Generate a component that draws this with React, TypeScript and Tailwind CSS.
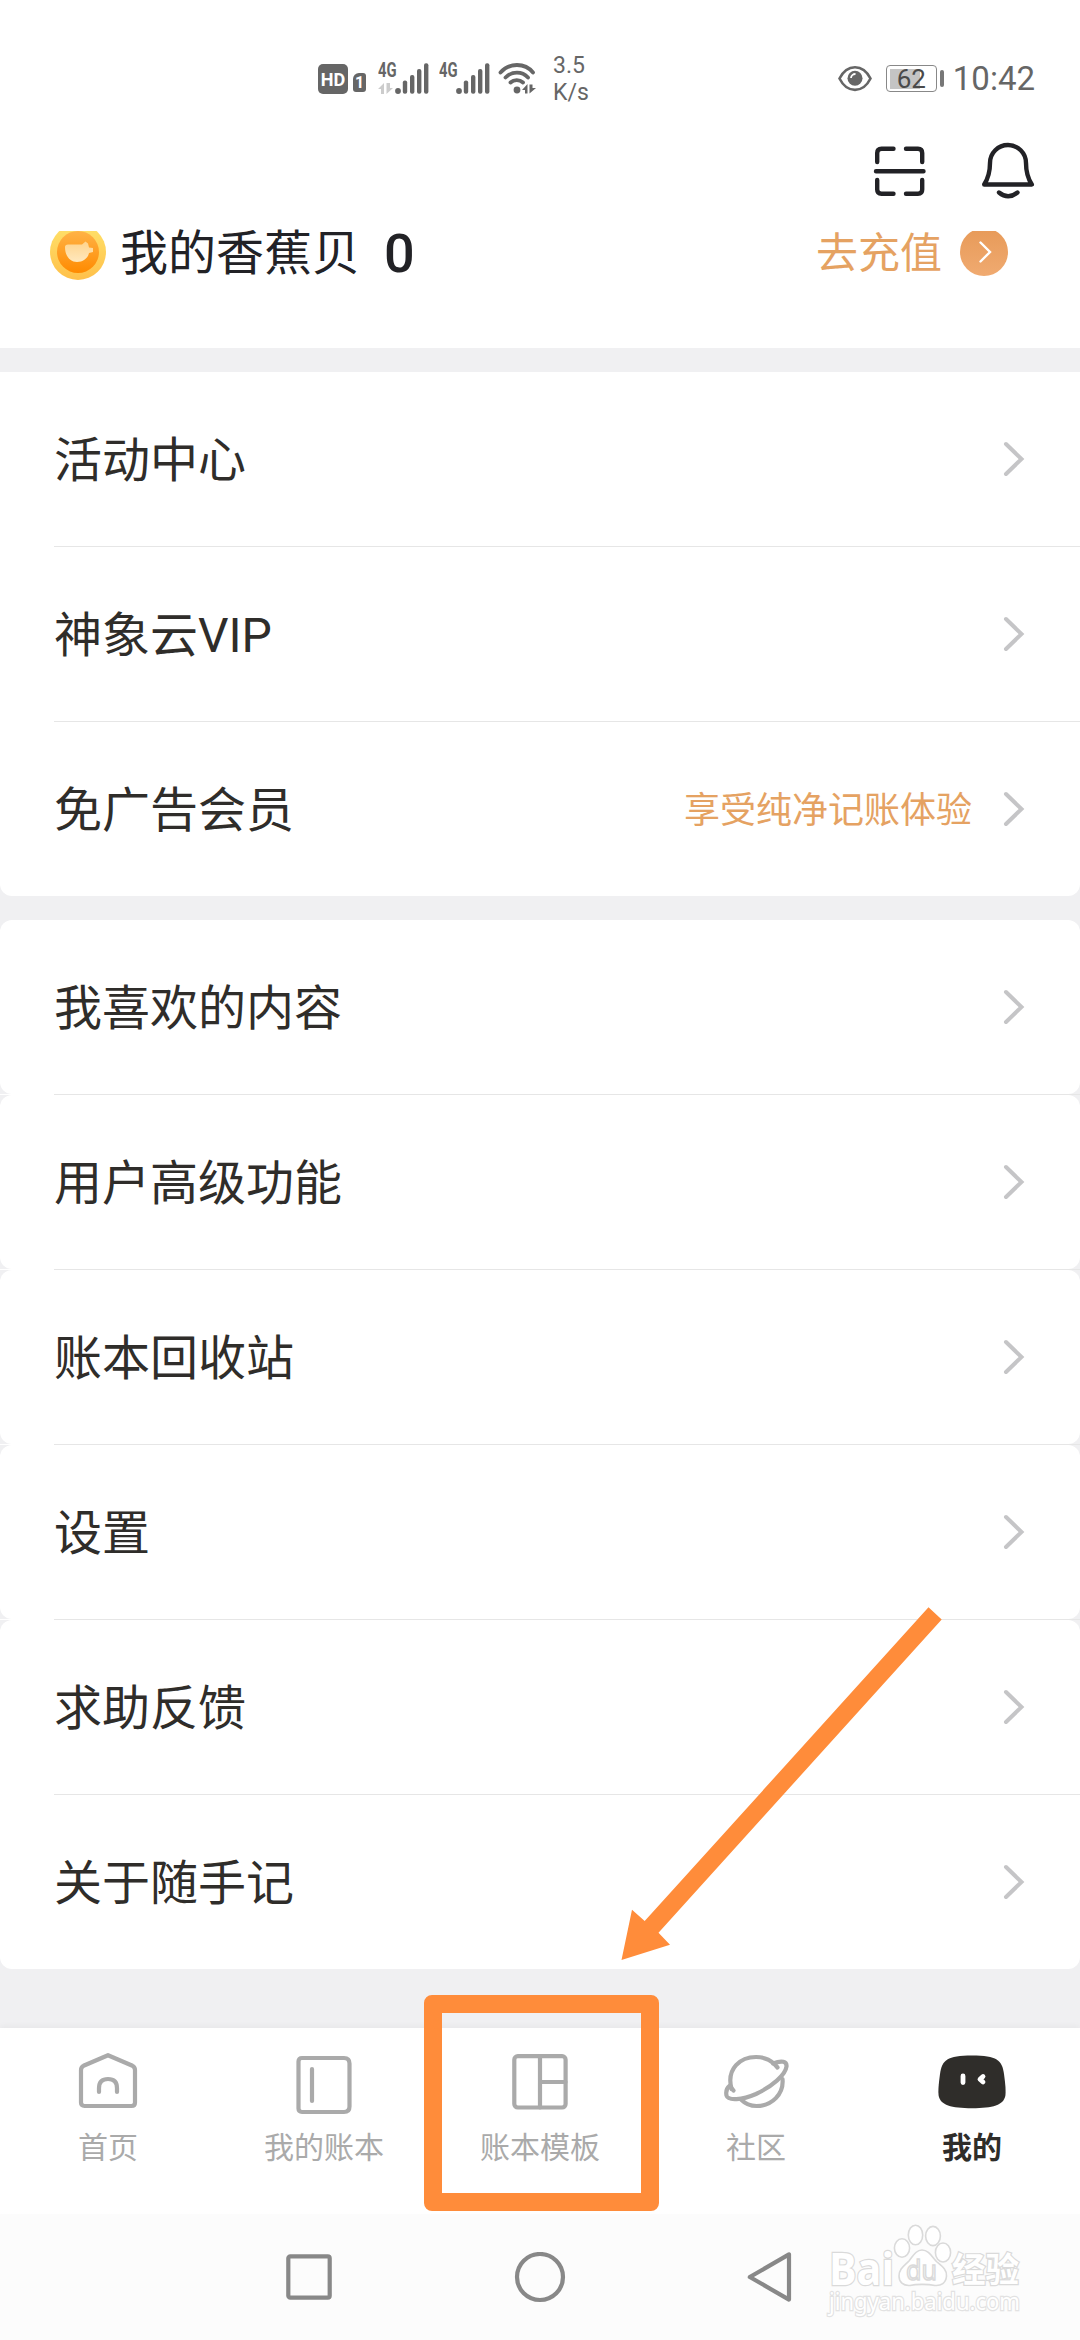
import type { ReactNode } from 'react'

interface MenuRow {
  label: string
  note?: string
  // cards in the second group have their own rounded corners
  top?: boolean
  bottom?: boolean
}

const SERVICES: MenuRow[] = [
  { label: '活动中心' },
  { label: '神象云VIP' },
  { label: '免广告会员', note: '享受纯净记账体验', bottom: true },
]

const SETTINGS: MenuRow[] = [
  { label: '我喜欢的内容', top: true, bottom: true },
  { label: '用户高级功能', top: true, bottom: true },
  { label: '账本回收站', top: true, bottom: true },
  { label: '设置', top: true, bottom: true },
  { label: '求助反馈', top: true },
  { label: '关于随手记', bottom: true },
]

function Signal() {
  return (
    <svg width="34" height="31" viewBox="0 0 34 31" fill="#666">
      <circle cx="3" cy="28" r="2.9" />
      <rect x="7.8" y="17.5" width="4.4" height="13.3" rx="2" />
      <rect x="15" y="12" width="4.4" height="18.8" rx="2" />
      <rect x="22" y="6" width="4.4" height="24.8" rx="2" />
      <rect x="29" y="0.3" width="4.4" height="30.5" rx="2" />
    </svg>
  )
}

function Network({ arrows }: { arrows?: boolean }) {
  return (
    <div className="relative flex h-[31px] w-[51px] justify-end">
      <span className="absolute -top-px left-0 origin-left scale-x-[0.74] text-[20px] leading-[17px] font-bold">4G</span>
      {arrows && (
        <svg className="absolute left-0 bottom-0" width="16" height="11" viewBox="0 0 16 11" fill="#ccc">
          <path d="M0 6 6 0V11H3V6ZM8.500 0V11L15 5H12V0Z" />
        </svg>
      )}
      <Signal />
    </div>
  )
}

function StatusBar() {
  return (
    <div className="flex h-[120px] items-start pt-[63px] pr-[45px] pl-[318px] text-[#666]">
      <div className="mt-px flex h-[30px] w-[30px] items-center justify-center rounded-[5px] bg-[#666] text-[19px] leading-none font-bold text-white">
        <span className="scale-x-[0.95]">HD</span>
      </div>
      <div className="mt-[10px] ml-[5px] flex h-[19px] w-[13px] items-center justify-center rounded-[3px] rounded-tl-[6px] bg-[#666] text-[16px] leading-none font-bold text-white">
        1
      </div>
      <div className="ml-3">
        <Network arrows />
      </div>
      <div className="ml-[10px]">
        <Network />
      </div>
      <svg className="ml-[8px]" width="39" height="31" viewBox="0 0 39 31" fill="none">
        <g stroke="#666" strokeWidth="3.8" strokeLinecap="round">
          <path d="M2.5 9.5C11 -.5 27 -.5 35 9.5" />
          <path d="M7.5 14.5C14 8 24 8 30 14.5" />
          <path d="M12.5 19.5C16 16.3 21.5 16.3 25 19.5" />
        </g>
        <circle cx="19" cy="27" r="3.4" fill="#666" />
        <path d="M24 27 29.5 21V30.5H27V27ZM31.5 21.5V30.5L38 25H34.5V21.5Z" fill="#666" />
      </svg>
      <div className="-mt-[11px] ml-[16px] text-[23px] leading-[27px]">
        <div>3.5</div>
        <div>K/s</div>
      </div>
      <div className="ml-auto flex h-[31px] items-center">
        <svg width="34" height="27" viewBox="0 0 34 27" fill="none">
          <path d="M1.5 13.5C9 -1.6 25 -1.6 32.5 13.5 25 28.6 9 28.6 1.5 13.5Z" stroke="#666" strokeWidth="2.6" />
          <circle cx="17" cy="13.3" r="7.5" fill="#666" />
          <path d="M13 13a4.3 4.3 0 0 1 4.5-4" stroke="#fff" strokeWidth="1.8" />
        </svg>
        <div className="relative ml-[14px] flex h-[27px] w-[51px] items-center justify-center rounded-[4px] border-[1.5px] border-[#888]">
          <div className="absolute top-[3px] left-[3px] h-[20px] w-[30px] bg-[#c4c4c4]" />
          <span className="relative text-[26px] leading-none text-[#4a4a4a]">62</span>
        </div>
        <div className="ml-[3px] h-[17px] w-[4px] rounded-sm bg-[#777]" />
        <span className="ml-[9px] text-[33px] leading-none">10:42</span>
      </div>
    </div>
  )
}

function TopActions() {
  return (
    <div className="flex h-[111px] items-start justify-end gap-[55px] pt-[22px] pr-[45px]">
      <svg className="mt-[3px]" width="53" height="52" viewBox="0 0 53 52" fill="none" stroke="#222226" strokeWidth="4.4" strokeLinecap="round">
        <path d="M3 26.3H50.5M4.2 17V8Q4.2 3.7 8.5 3.7H20.5M33 3.7H45Q49.2 3.7 49.2 8V17M4.2 35V44.5Q4.2 48.8 8.5 48.8H20.5M33 48.8H45Q49.2 48.8 49.2 44.5V35" />
      </svg>
      <svg width="54" height="57" viewBox="0 0 54 57" fill="none" stroke="#222226" strokeWidth="4.4" strokeLinecap="round" strokeLinejoin="round">
        <path d="M3.2 42.5C8 35 9 29 9 21A18 18 0 0 1 45 21C45 29 46 35 50.8 42.5Z" />
        <path d="M18 50.5Q27 58 36.5 50.5" />
      </svg>
    </div>
  )
}

function Coin() {
  return (
    <svg className="shrink-0 self-start" width="56" height="49" viewBox="0 7 56 49">
      <defs>
        <linearGradient id="coinRim" x1="0" y1="0" x2="0" y2="1">
          <stop offset="0" stopColor="#ffe26a" />
          <stop offset="1" stopColor="#ffc04a" />
        </linearGradient>
        <linearGradient id="coinFace" x1="0" y1="0" x2="0" y2="1">
          <stop offset="0" stopColor="#ffb347" />
          <stop offset="1" stopColor="#ff8a00" />
        </linearGradient>
        <linearGradient id="coinPig" x1="0" y1="0" x2="0" y2="1">
          <stop offset="0" stopColor="#ffd48c" />
          <stop offset="1" stopColor="#ffe8be" />
        </linearGradient>
      </defs>
      <circle cx="28" cy="28" r="28" fill="url(#coinRim)" />
      <circle cx="28" cy="28" r="21" fill="url(#coinFace)" />
      <path d="M15 23Q15 20.5 18 20.5H32L35.5 17.5 38 19.5 39 23.5 43 24V28L39 29C38 34 33 38 27 38 20 38 15 32 15 23Z" fill="url(#coinPig)" />
    </svg>
  )
}

function Balance() {
  return (
    <section className="h-[117px] bg-white">
      <div className="flex h-[46px] items-center pr-[72px] pl-[50px]">
        <Coin />
        <span className="ml-[14px] text-[48px] leading-none whitespace-nowrap text-[#222226]">我的香蕉贝</span>
        <span className="ml-[24px] text-[54px] leading-none font-medium text-[#222226]">0</span>
        <span className="ml-auto text-[42px] leading-none whitespace-nowrap text-[#e5a262]">去充值</span>
        <svg className="ml-[18px] shrink-0 self-start" width="48" height="45" viewBox="0 3 48 45" fill="none">
          <defs>
            <linearGradient id="goFill" x1="0" y1="0" x2="0" y2="1">
              <stop offset="0" stopColor="#e79a58" />
              <stop offset="1" stopColor="#f0aa70" />
            </linearGradient>
          </defs>
          <circle cx="24" cy="24" r="24" fill="url(#goFill)" />
          <path d="M20.5 14.5 30 24 20.5 33.5" stroke="#fff" strokeWidth="2.4" strokeLinecap="round" />
        </svg>
      </div>
    </section>
  )
}

function Row({ row }: { row: MenuRow }) {
  return (
    <div
      className={`flex h-[174px] items-center bg-white pr-[55px] pl-[54px] ${row.top ? 'rounded-t-xl' : ''} ${row.bottom ? 'rounded-b-xl' : ''}`}
    >
      <span className="pt-[3px] text-[48px] leading-none text-[#2f2d2a]">{row.label}</span>
      {row.note && <span className="ml-auto pt-[3px] text-[36px] leading-none text-[#e5a262]">{row.note}</span>}
      <svg className={row.note ? 'ml-[31px]' : 'ml-auto'} width="22" height="36" viewBox="0 0 22 36" fill="none">
        <path d="M3 3 18.5 18 3 33" stroke="#c5c5c7" strokeWidth="4" strokeLinecap="round" />
      </svg>
    </div>
  )
}

function Menu({ rows }: { rows: MenuRow[] }) {
  return (
    <section>
      {rows.map((row, i) => (
        <div key={row.label}>
          {i > 0 && (
            <div className="h-px bg-white pl-[54px]">
              <div className="h-px bg-[#e6e6e6]" />
            </div>
          )}
          <Row row={row} />
        </div>
      ))}
    </section>
  )
}

function Tab({ label, active, children }: { label: string; active?: boolean; children: ReactNode }) {
  return (
    <div className="flex flex-1 flex-col items-center pt-[23px]">
      <svg width="68" height="66" viewBox="0 0 68 66" fill="none" stroke="#aaa" strokeWidth="4.2" strokeLinecap="round" strokeLinejoin="round">
        {children}
      </svg>
      <span className={`mt-[16px] text-[30px] leading-[30px] ${active ? 'font-bold text-[#2f2d2a]' : 'text-[#aaa]'}`}>
        {label}
      </span>
    </div>
  )
}

function TabBar() {
  return (
    <nav className="relative flex h-[186px] bg-white shadow-[0_-2px_6px_rgba(0,0,0,0.04)]">
      <Tab label="首页">
        <path d="M34 4.2 58.5 14.8Q61 16 61 19V51.5Q61 55 57.5 55H10.5Q7 55 7 51.5V19Q7 16 9.5 14.8Z" />
        <path d="M25 41V37Q25 28 34 28T43 37V41" />
      </Tab>
      <Tab label="我的账本">
        <path d="M12 7H54Q59.5 7 59.5 12.5V55.5Q59.5 61 54 61H12Q8.5 61 8.5 57.5V10.5Q8.5 7 12 7Z" />
        <path d="M22 18V50" />
      </Tab>
      <Tab label="账本模板">
        <rect x="8.3" y="5.2" width="51.3" height="51.3" rx="3.5" />
        <path d="M34 5.2V56.5M34 31H59.5" />
      </Tab>
      <Tab label="社区">
        <path d="M9.5 38C4 17 19 6 34 6 42 6 48 9 52 12.5" />
        <path d="M60.5 28C62 43 50 55 34.5 55 28 55 23 52.5 19 48.5" />
        <path d="M51 12.5C60 9 65 10.5 64.5 15.5 63.5 24 50 35.5 34 43 20 49 6 50 4.5 44.5 3.8 41 5 37 7.5 35M11.5 39.5 9.5 37M52 12.5 55.5 16.5" />
      </Tab>
      <Tab label="我的" active>
        <path d="M34 4.5C59 4.5 64 9 66 23 67.5 34 68 41 67.3 45 65.5 54 55 57.2 34 57.2S2.5 54 .7 45C0 41 .5 34 2 23 4 9 9 4.5 34 4.5Z" fill="#2f2d2a" stroke="none" />
        <path d="M25 25V31.5M45 25.500 42 28.300 45 31" stroke="#fff" strokeWidth="4.8" />
      </Tab>
      {/* callout frame around the template tab */}
      <div className="absolute -top-[33px] left-[424px] h-[216px] w-[235px] rounded-[8px] border-[18px] border-[#ff8c3a]" />
    </nav>
  )
}

function Watermark() {
  return (
    <svg
      className="absolute top-[5px] left-[820px]"
      width="210"
      height="110"
      viewBox="0 0 210 110"
      fill="#fff"
      stroke="#dadada"
      strokeWidth="2.4"
    >
      <g paintOrder="stroke" fontWeight="700">
        <text x="9" y="66" fontSize="45" fontFamily="Open Sans" textLength="65" lengthAdjust="spacingAndGlyphs">
          Bai
        </text>
        <text x="132" y="63" fontSize="34" fontFamily="Noto Sans CJK SC" textLength="67" lengthAdjust="spacingAndGlyphs">
          经验
        </text>
      </g>
      <g strokeWidth="1.6">
        <ellipse cx="82" cy="29" rx="7.6" ry="9.3" />
        <ellipse cx="95.5" cy="16" rx="7.2" ry="9.8" />
        <ellipse cx="113" cy="17" rx="7.4" ry="9.6" />
        <ellipse cx="123" cy="33.5" rx="7.6" ry="9.5" />
        <path d="M102 31C109 31 112 38 117 43 123 48 127 51 126.5 57 126 64 121 67 115 66.5 108 65 96 65 90 66.5 83 67 79 63 79 57 79 50 84 47 89 42 93 37 96 31 102 31Z" />
        <text x="86" y="61" fontSize="28" fontFamily="Open Sans" textLength="31" lengthAdjust="spacingAndGlyphs">
          du
        </text>
      </g>
      <text x="9" y="91" fontSize="24" fontFamily="Noto Sans" paintOrder="stroke" textLength="191" lengthAdjust="spacingAndGlyphs" stroke="#e2e2e2">
        jingyan.baidu.com
      </text>
    </svg>
  )
}

function SystemNav() {
  return (
    <div className="relative h-[126px] bg-[#fcfcfc] pt-[38px]">
      <svg className="ml-[284px]" width="512" height="52" viewBox="0 0 512 52" fill="none" stroke="#888" strokeWidth="4.2" strokeLinejoin="round">
        <rect x="4.3" y="4.3" width="41.4" height="41.4" rx="2" />
        <circle cx="256" cy="25" r="23" />
        <path d="M465.8 25 505 2.4V47.6Z" />
      </svg>
      <Watermark />
    </div>
  )
}

export default function App() {
  return (
    <div className="relative h-[2340px] w-[1080px] overflow-hidden bg-[#f0f0f2] font-[Roboto,'Noto_Sans_CJK_SC',sans-serif]">
      <header className="bg-white">
        <StatusBar />
        <TopActions />
      </header>
      <main className="flex h-[1797px] flex-col gap-6">
        <Balance />
        <Menu rows={SERVICES} />
        <Menu rows={SETTINGS} />
      </main>
      <TabBar />
      <SystemNav />
      {/* pointer from the list down to the template tab */}
      <svg className="absolute top-[1600px] left-[610px]" width="340" height="370" viewBox="610 1600 340 370" fill="#ff8c3a">
        <path d="M928.5 1607.3 941.7 1619.5 658.5 1932.7 670 1944.7 621.5 1960 632 1909.8 644.7 1921Z" />
      </svg>
    </div>
  )
}
